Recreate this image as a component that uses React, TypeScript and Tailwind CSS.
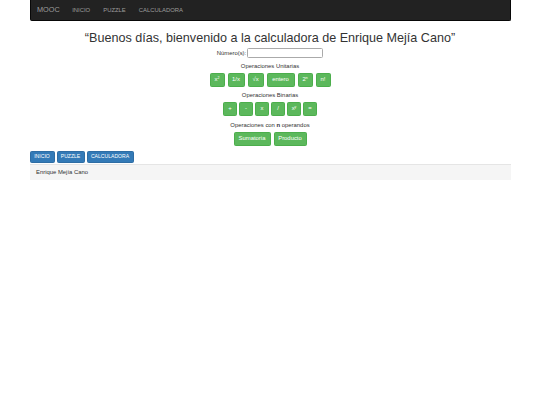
export default function App() {
  const unitarias = [
    { k: "x2", w: "w-[15px]", label: <>x<sup className="text-[3.5px]">2</sup></> },
    { k: "inv", w: "w-[17px]", label: "1/x" },
    { k: "sqrt", w: "w-[16px]", label: "√x" },
    { k: "entero", w: "w-[28px]", label: "entero" },
    { k: "2n", w: "w-[15px]", label: <>2<sup className="text-[3.5px]">n</sup></> },
    { k: "fact", w: "w-[15px]", label: "n!" },
  ];
  const binarias = [
    { k: "mas", label: "+" },
    { k: "menos", label: "-" },
    { k: "por", label: "x" },
    { k: "div", label: "/" },
    { k: "pow", label: <>x<sup className="text-[3.5px]">y</sup></> },
    { k: "igual", label: "=" },
  ];

  const btn =
    "bg-[#5cb85c] border border-[#4cae4c] text-white rounded-[1.5px] h-[14px] text-[5.9px] leading-none flex items-center justify-center";

  return (
    <div className="w-[540px] h-[405px] bg-white font-['Liberation_Sans',Arial,sans-serif] text-[#333]">
      <div className="w-[481px] mx-auto">
        {/* navbar */}
        <nav className="h-[21px] bg-[#222] border border-t-0 border-[#080808] rounded-b-[2px] flex items-center">
          <span className="text-[7.3px] text-[#9d9d9d] ml-[6.5px] mr-[12.5px]">MOOC</span>
          <span className="text-[5.9px] text-[#9d9d9d] mr-[13px]">INICIO</span>
          <span className="text-[5.9px] text-[#9d9d9d] mr-[13px]">PUZZLE</span>
          <span className="text-[5.9px] text-[#9d9d9d]">CALCULADORA</span>
        </nav>

        <div className="flex flex-col items-center">
          <h1 className="text-[12.6px] leading-none mt-[10.5px] mb-[4px]">
            “Buenos días, bienvenido a la calculadora de Enrique Mejía Cano”
          </h1>

          <div className="flex items-center gap-[1px] text-[5.9px]">
            <span>Número(s):</span>
            <div className="w-[76px] h-[10px] border border-[#aaa] rounded-[1.5px] bg-white" />
          </div>

          <p className="text-[5.9px] mt-[3.5px] mb-[2.6px]">Operaciones Unitarias</p>
          <div className="flex gap-[3px]">
            {unitarias.map((b) => (
              <div key={b.k} className={btn + " " + b.w}>
                {b.label}
              </div>
            ))}
          </div>

          <p className="text-[5.9px] mt-[3.6px] mb-[2.6px]">Operaciones Binarias</p>
          <div className="flex gap-[1.5px]">
            {binarias.map((b) => (
              <div key={b.k} className={btn + " w-[14.5px]"}>
                {b.label}
              </div>
            ))}
          </div>

          <p className="text-[5.9px] mt-[4.6px] mb-[2px]">
            Operaciones con <b>n</b> operandos
          </p>
          <div className="flex gap-[3px]">
            <div className={btn + " w-[37px]"}>Sumatoria</div>
            <div className={btn + " w-[33px]"}>Producto</div>
          </div>
        </div>

        <div className="flex gap-[2px] mt-[5.5px]">
          {[
            { t: "INICIO", w: "w-[25px]" },
            { t: "PUZZLE", w: "w-[28px]" },
            { t: "CALCULADORA", w: "w-[47px]" },
          ].map((b) => (
            <div
              key={b.t}
              className={
                "bg-[#337ab7] border border-[#2e6da4] text-white text-[5.1px] h-[12px] rounded-[1.5px] flex items-center justify-center " +
                b.w
              }
            >
              {b.t}
            </div>
          ))}
        </div>
        <div className="bg-[#f5f5f5] border-t border-[#e5e5e5] h-[16px] mt-[1px] flex items-center px-[6.5px] text-[5.9px]">
          Enrique Mejía Cano
        </div>
      </div>
    </div>
  );
}
